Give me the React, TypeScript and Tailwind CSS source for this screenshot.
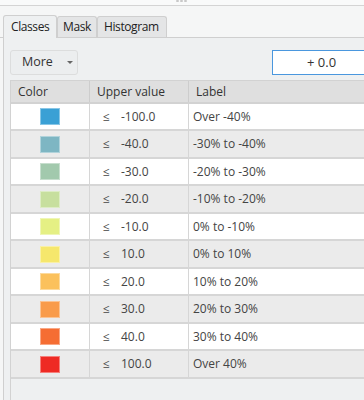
import React from 'react';

const rows = [
  { color: '#3aa0d5', value: '-100.0', label: 'Over -40%' },
  { color: '#7eb6c3', value: '-40.0', label: '-30% to -40%' },
  { color: '#a2c9ad', value: '-30.0', label: '-20% to -30%' },
  { color: '#c7df9e', value: '-20.0', label: '-10% to -20%' },
  { color: '#e5f084', value: '-10.0', label: '0% to -10%' },
  { color: '#f6e76c', value: '10.0', label: '0% to 10%' },
  { color: '#fbc15c', value: '20.0', label: '10% to 20%' },
  { color: '#f99b4a', value: '30.0', label: '20% to 30%' },
  { color: '#f56d33', value: '40.0', label: '30% to 40%' },
  { color: '#ee2a24', value: '100.0', label: 'Over 40%' },
];

export default function App() {
  return (
    <div className="w-[364px] h-[400px] overflow-hidden bg-[#f5f6f6] flex flex-col font-['Open_Sans',sans-serif] text-[12px] text-[#333]">
      {/* splitter strip */}
      <div className="relative h-[6px] shrink-0 bg-[#f9fafa] border-b border-[#d4d4d4]">
        <div className="absolute left-[176px] top-0 flex gap-[1px]">
          <span className="w-[3px] h-[2px] rounded-full bg-[#c8c8c8]" />
          <span className="w-[3px] h-[2px] rounded-full bg-[#c8c8c8]" />
          <span className="w-[3px] h-[2px] rounded-full bg-[#c8c8c8]" />
        </div>
      </div>

      {/* tabs */}
      <div className="h-[32px] shrink-0 flex items-end pl-[3px] border-b border-[#cfcfcf] tracking-[-0.4px]">
        <div className="h-[23px] -mb-px w-[54px] pl-[7px] flex items-center rounded-t-[3px] border border-b-0 border-[#cfcfcf] bg-[#eef0f1] text-[#222]">
          Classes
        </div>
        <div className="h-[21px] w-[40px] pl-[5px] flex items-center rounded-t-[3px] border border-b-0 border-[#cfcfcf] bg-[#e4e5e6] text-[#222]">
          Mask
        </div>
        <div className="h-[21px] w-[70px] pl-[6px] flex items-center rounded-t-[3px] border border-b-0 border-[#cfcfcf] bg-[#e4e5e6] text-[#222]">
          Histogram
        </div>
      </div>

      {/* panel */}
      <div className="flex-1 ml-[3px] w-[420px] bg-[#eef0f1] border-l border-[#cfcfcf] pt-[12px] pl-[6px] flex flex-col">
        <div className="flex items-center">
          <button className="w-[68px] h-[25px] rounded-[3px] border border-[#dcdddd] bg-[#eceeef] flex items-center pl-[11px] text-[12.5px] text-[#333]">
            More
            <span className="ml-[14px] w-0 h-0 border-l-[3px] border-r-[3px] border-t-[3px] border-l-transparent border-r-transparent border-t-[#666]" />
          </button>
          <div className="ml-[194px] w-[100px] h-[25px] bg-white border border-[#4a97de] flex items-center pl-[34px] text-[13px] text-[#333]">
            + 0.0
          </div>
        </div>

        <div className="mt-[5px] flex-1 border-l border-t border-[#d2d2d2] flex flex-col">
          <div className="flex h-[23px] bg-[#dfdfdf] border-b-2 border-[#d2d2d2] text-[#333]">
            <div className="w-[79px] pl-[7px] flex items-center border-r border-[#cdcdcd]">Color</div>
            <div className="w-[99px] pl-[7px] flex items-center border-r border-[#cdcdcd]">Upper value</div>
            <div className="flex-1 pl-[7px] flex items-center">Label</div>
          </div>
          {rows.map((r, i) => (
            <div
              key={r.value}
              className={`flex border-b-2 border-[#d6d6d6] text-[#444] ${i % 2 === 0 ? 'bg-white h-[27px]' : 'bg-[#ebebeb] h-[28px]'}`}
            >
              <div className="w-[79px] flex items-center justify-center border-r border-[#d6d6d6]">
                <span className="w-[20px] h-[17px] border border-white/40" style={{ backgroundColor: r.color }} />
              </div>
              <div className="w-[99px] flex items-center pl-[13px] border-r border-[#d6d6d6]">
                <span className="w-[18px]">≤</span>
                <span>{r.value}</span>
              </div>
              <div className="flex-1 flex items-center pl-[4px]">{r.label}</div>
            </div>
          ))}
        </div>
      </div>
    </div>
  );
}
